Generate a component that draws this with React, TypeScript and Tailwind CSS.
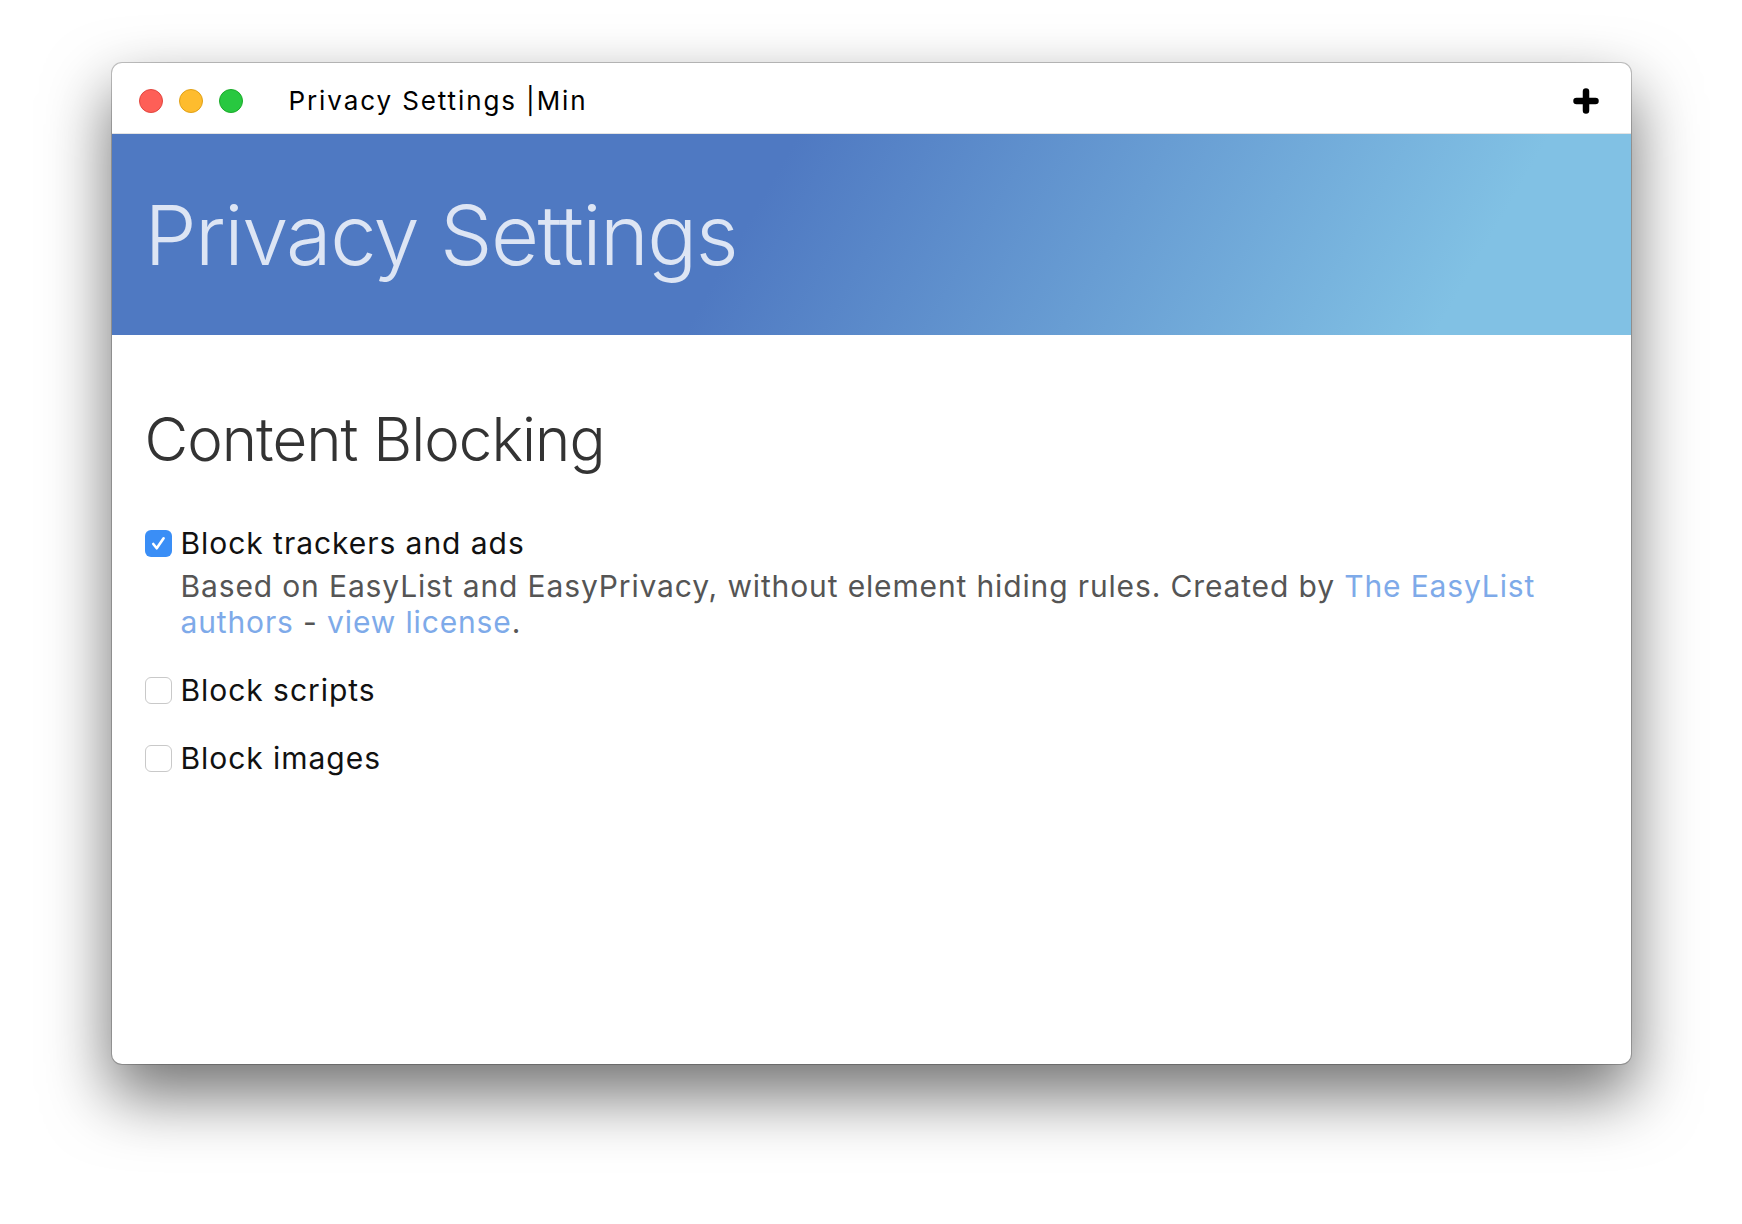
const FONT = "font-['Inter','Roboto','Liberation_Sans',sans-serif]";

function TrafficLights() {
  return (
    <div className="flex items-center gap-4">
      <span className="w-6 h-6 rounded-full bg-[#fe5f57] border border-[#e2463f]" />
      <span className="w-6 h-6 rounded-full bg-[#febc2e] border border-[#e1a116]" />
      <span className="w-6 h-6 rounded-full bg-[#28c840] border border-[#1aab29]" />
    </div>
  );
}

function Checkbox({ checked }: { checked?: boolean }) {
  if (checked) {
    return (
      <span className="w-[27px] h-[27px] shrink-0 rounded-[6px] bg-[#3a8ef6] flex items-center justify-center">
        <svg viewBox="0 0 16 16" className="w-[19px] h-[19px]" fill="none">
          <path d="M3.6 8.4 L6.5 12 L12.3 3.6" stroke="white" strokeWidth="2.2" strokeLinecap="round" strokeLinejoin="round" />
        </svg>
      </span>
    );
  }
  return <span className="w-[27px] h-[27px] shrink-0 rounded-[6px] bg-white border border-[#c9c9c9]" />;
}

function Option({ label, checked, children }: { label: string; checked?: boolean; children?: React.ReactNode }) {
  return (
    <div className="flex flex-col">
      <div className="flex items-center gap-[9px]">
        <Checkbox checked={checked} />
        <span className="text-[30px] leading-[36px] tracking-[0.95px] text-[#111]">{label}</span>
      </div>
      {children}
    </div>
  );
}

export default function App() {
  return (
    <div className={`w-[1742px] h-[1224px] bg-white overflow-hidden ${FONT}`}>
      <div className="mx-auto mt-[63px] w-[1519px] h-[1001px] rounded-[10px] bg-white overflow-hidden flex flex-col shadow-[0_0_0_1px_rgba(0,0,0,0.22),0_30px_64px_2px_rgba(0,0,0,0.55)]">
        <div className="h-[71px] shrink-0 flex items-center pt-[5px] pl-[27px] pr-[32px] border-b border-[#e3e3e3]">
          <TrafficLights />
          <div className="ml-[46px] text-[26px] text-black tracking-[1.9px]">Privacy Settings |Min</div>
          <svg viewBox="0 0 26 26" className="ml-auto w-[26px] h-[26px]">
            <path d="M13 3.5 V22.5 M3.5 13 H22.5" stroke="black" strokeWidth="6.5" strokeLinecap="round" />
          </svg>
        </div>
        <div className="h-[201px] shrink-0 bg-[linear-gradient(120deg,#4f79c2_42%,#81c1e4_88%)] flex items-center px-[33px]">
          <h1 className="text-[83px] font-light text-[#dde5f4] leading-none tracking-[-1.5px] pt-[2px]">Privacy Settings</h1>
        </div>
        <div className="px-[33px] pt-[68px] flex flex-col">
          <h2 className="text-[60px] font-light text-[#333] leading-[72px] tracking-[-1px]">Content Blocking</h2>
          <div className="mt-[50px] flex flex-col gap-[32px]">
            <Option label="Block trackers and ads" checked>
              <p className="pl-[36px] pt-[7px] text-[30px] leading-[36px] tracking-[0.86px] text-[#555]">
                Based on EasyList and EasyPrivacy, without element hiding rules. Created by{" "}
                <a className="text-[#7eaae9]">The EasyList</a> <a className="text-[#7eaae9]">authors</a> -{" "}
                <a className="text-[#7eaae9]">view license</a>.
              </p>
            </Option>
            <Option label="Block scripts" />
            <Option label="Block images" />
          </div>
        </div>
      </div>
    </div>
  );
}
